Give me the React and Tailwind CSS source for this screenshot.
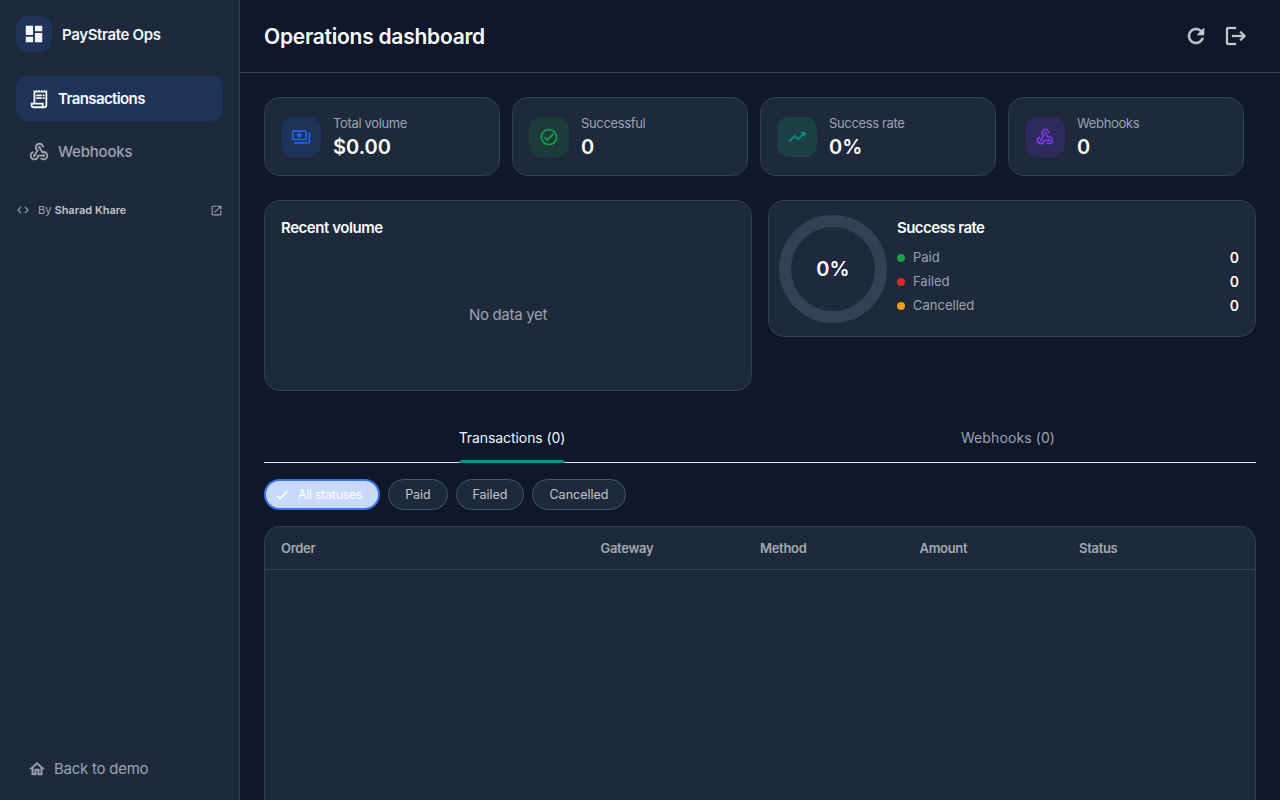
import {
  MdDashboard,
  MdOutlineReceiptLong,
  MdOutlineWebhook,
  MdCode,
  MdOutlineOpenInNew,
  MdOutlinePayments,
  MdOutlineCheckCircle,
  MdTrendingUp,
  MdCheck,
} from "react-icons/md";

const stats = [
  { label: "Total volume", value: "$0.00", Icon: MdOutlinePayments, box: "bg-[#1e3358]", color: "text-[#2563eb]" },
  { label: "Successful", value: "0", Icon: MdOutlineCheckCircle, box: "bg-[#1e3b3b]", color: "text-[#16a34a]" },
  { label: "Success rate", value: "0%", Icon: MdTrendingUp, box: "bg-[#1c4046]", color: "text-[#0d9488]" },
  { label: "Webhooks", value: "0", Icon: MdOutlineWebhook, box: "bg-[#2e2a5b]", color: "text-[#7c3aed]" },
];

const legend = [
  { label: "Paid", dot: "bg-[#16a34a]" },
  { label: "Failed", dot: "bg-[#dc2626]" },
  { label: "Cancelled", dot: "bg-[#f59e0b]" },
];

// heavier versions of the material glyphs, the package ones come out too thin here
function BoldIcon({ d, size = 24, weight = 0.6 }) {
  return (
    <svg width={size} height={size} viewBox="0 0 24 24" fill="currentColor" stroke="currentColor" strokeWidth={weight}>
      <path d={d} />
    </svg>
  );
}

const refreshPath = "M17.65 6.35C16.2 4.9 14.21 4 12 4c-4.42 0-7.99 3.58-7.99 8s3.57 8 7.99 8c3.73 0 6.84-2.55 7.73-6h-2.08c-.82 2.33-3.04 4-5.65 4-3.31 0-6-2.69-6-6s2.69-6 6-6c1.66 0 3.14.69 4.22 1.78L13 11h7V4l-2.35 2.35z";
const logoutPath = "M17 7l-1.41 1.41L18.17 11H8v2h10.17l-2.58 2.58L17 17l5-5zM4 5h8V3H4c-1.1 0-2 .9-2 2v14c0 1.1.9 2 2 2h8v-2H4V5z";
const homePath = "M12 5.69l5 4.5V18h-2v-6H9v6H7v-7.81l5-4.5M12 3L2 12h3v8h6v-6h2v6h6v-8h3L12 3z";

function Sidebar() {
  return (
    <aside className="w-[240px] shrink-0 h-full flex flex-col bg-[#1e293b] border-r border-[#334155] px-4 pt-4 pb-[11px]">
      <div className="flex items-center gap-2.5 h-9">
        <div className="w-9 h-9 rounded-xl bg-[#1e3358] flex items-center justify-center text-[#f1f5f9]">
          <MdDashboard size={22} />
        </div>
        <span className="pt-[2px] text-[15px] font-semibold text-[#f1f5f9] tracking-[-0.35px]">PayStrate Ops</span>
      </div>

      <nav className="mt-[24px] flex flex-col gap-2">
        <div className="h-[45px] rounded-xl bg-[#1e3358] flex items-center gap-2 px-3 text-[#f8fafc]">
          <MdOutlineReceiptLong size={22} />
          <span className="pt-[2px] text-[15px] font-semibold tracking-[-0.6px]">Transactions</span>
        </div>
        <div className="h-[45px] rounded-xl flex items-center gap-2 px-3 text-[#9ca3af]">
          <MdOutlineWebhook size={22} />
          <span className="pt-[2px] text-[15px] font-medium tracking-[-0.2px]">Webhooks</span>
        </div>
      </nav>

      <div className="mt-[28px] flex items-center text-[#9ca3af]">
        <MdCode size={14} />
        <span className="ml-[8px] text-[11px] text-[#9ca3af]">
          By <span className="font-semibold text-[#c0c4cb]">Sharad Khare</span>
        </span>
        <MdOutlineOpenInNew size={13} className="ml-auto" />
      </div>

      <div className="mt-auto flex items-center gap-2 h-[40px] pl-[12px] text-[#9ca3af]">
        <BoldIcon d={homePath} size={18} />
        <span className="text-[15px] tracking-[-0.25px]">Back to demo</span>
      </div>
    </aside>
  );
}

function StatCard({ stat }) {
  const { label, value, Icon, box, color } = stat;
  return (
    <div className="h-[79px] rounded-2xl bg-[#1e293b] border border-[#334155] flex items-center gap-3 px-4">
      <div className={`w-10 h-10 rounded-xl flex items-center justify-center ${box} ${color}`}>
        <Icon size={20} />
      </div>
      <div className="pt-[2px]">
        <div className="text-[13px] leading-[17px] tracking-[-0.35px] text-[#9ca3af]">{label}</div>
        <div className="mt-[2px] text-[20px] leading-[26px] font-semibold text-[#f8fafc]">{value}</div>
      </div>
    </div>
  );
}

export default function App() {
  return (
    <div className="h-screen w-full flex overflow-hidden bg-[#0f172a] font-['Inter',sans-serif]">
      <Sidebar />
      <main className="flex-1 min-w-0 flex flex-col">
        <header className="h-[73px] shrink-0 border-b border-[#334155] flex items-center justify-between pl-6 pr-[32px]">
          <h1 className="pt-[2px] text-[21px] font-semibold text-[#f8fafc] tracking-[-0.25px]">Operations dashboard</h1>
          <div className="flex items-center gap-[16px] text-[#c2c6cc]">
            <BoldIcon d={refreshPath} />
            <BoldIcon d={logoutPath} weight={0.3} />
          </div>
        </header>

        <div className="px-6 pt-6">
          <div className="grid grid-cols-4 gap-3 w-[980px]">
            {stats.map((s) => (
              <StatCard key={s.label} stat={s} />
            ))}
          </div>

          <div className="grid grid-cols-2 gap-4 mt-6 items-start">
            <section className="h-[191px] rounded-2xl bg-[#1e293b] border border-[#334155] p-4 flex flex-col">
              <h2 className="text-[15px] font-semibold text-[#f8fafc] tracking-[-0.45px]">Recent volume</h2>
              <div className="flex-1 flex items-center justify-center text-[15px] tracking-[-0.3px] text-[#9ca3af] pt-[16px]">No data yet</div>
            </section>

            <section className="h-[137px] rounded-2xl bg-[#1e293b] border border-[#334155] pl-[10px] pr-4 flex items-center gap-[10px]">
              <div className="w-[108px] h-[108px] pt-[1px] rounded-full border-[12px] border-[#334155] flex items-center justify-center text-[20px] font-semibold text-[#f8fafc]">
                0%
              </div>
              <div className="flex-1 pb-[3px]">
                <h2 className="text-[15px] leading-[22px] font-semibold text-[#f8fafc] tracking-[-0.55px] mb-[7px]">Success rate</h2>
                {legend.map((l) => (
                  <div key={l.label} className="h-6 flex items-center text-[13px] text-[#9ca3af]">
                    <span className={`w-2 h-2 rounded-full mr-2 ${l.dot}`} />
                    <span>{l.label}</span>
                    <span className="ml-auto text-[14px] font-semibold text-[#f8fafc]">0</span>
                  </div>
                ))}
              </div>
            </section>
          </div>

          <div className="mt-6 grid grid-cols-2 h-[48px] border-b border-[#e2e8f0]">
            <div className="flex justify-center">
              <div className="relative h-[47px] pb-[3px] flex items-center text-[14px] tracking-[-0.08px] text-[#f1f5f9]">
                Transactions (0)
                <span className="absolute left-0 right-0 bottom-[-1px] h-[3px] rounded-t bg-[#0d9488]" />
              </div>
            </div>
            <div className="pb-[3px] flex items-center justify-center text-[14px] tracking-[0.1px] text-[#9ca3af]">Webhooks (0)</div>
          </div>

          <div className="mt-4 flex items-center gap-2">
            <div className="h-[31px] w-[116px] rounded-full bg-[#c9d9f9] border-2 border-[#3b74e8] flex items-center pl-[8px] gap-2 text-[12.5px] tracking-[-0.3px] text-white">
              <MdCheck size={16} />
              <span className="pt-[2px]">All statuses</span>
            </div>
            <div className="h-[31px] w-[59.7px] pt-[2px] rounded-full bg-[#1e293b] border border-[#475569] flex items-center justify-center text-[12.5px] tracking-[-0.1px] text-[#c2c6cc]">Paid</div>
            <div className="h-[31px] w-[68.6px] pt-[2px] rounded-full bg-[#1e293b] border border-[#475569] flex items-center justify-center text-[12.5px] text-[#c2c6cc]">Failed</div>
            <div className="h-[31px] w-[93.4px] pt-[2px] rounded-full bg-[#1e293b] border border-[#475569] flex items-center justify-center text-[12.5px] text-[#c2c6cc]">Cancelled</div>
          </div>

          <div className="mt-4 h-[400px] rounded-2xl bg-[#1e293b] border border-[#334155]">
            <div className="h-[43px] pt-[2px] border-b border-[#334155] grid grid-cols-[319.5px_159.5px_159.5px_159.5px_1fr] items-center px-4 text-[13px] tracking-[-0.3px] font-semibold text-[#a3a8b0]">
              <span>Order</span>
              <span>Gateway</span>
              <span>Method</span>
              <span>Amount</span>
              <span>Status</span>
            </div>
          </div>
        </div>
      </main>
    </div>
  );
}
